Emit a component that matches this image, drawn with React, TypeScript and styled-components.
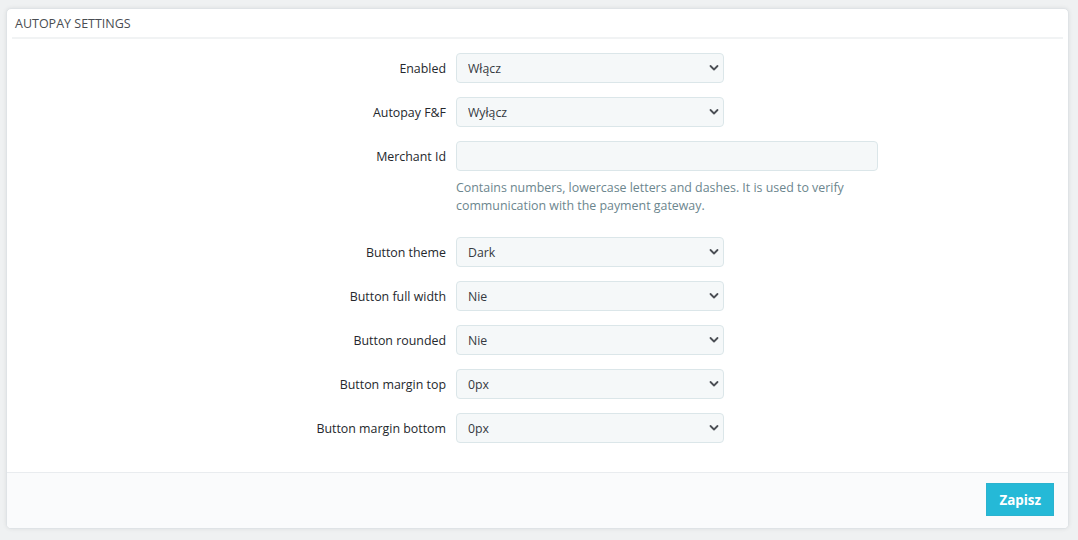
import React from "react";
import styled, { createGlobalStyle } from "styled-components";

const Global = createGlobalStyle`
  html, body { margin: 0; padding: 0; background: #eff1f2; }
  body { font-family: "Open Sans", "Liberation Sans", sans-serif; color: #363a41; }
  * { box-sizing: border-box; }
`;

const Page = styled.div`
  padding: 8px 9px 11px 6px;
`;

const Card = styled.div`
  background: #fff;
  border: 1px solid #dfe3e6;
  border-radius: 5px;
  box-shadow: 0 0 4px rgba(0, 0, 0, 0.08);
  overflow: hidden;
`;

const Header = styled.div`
  margin: 0 5px;
  height: 30px;
  padding: 0 3px;
  display: flex;
  align-items: center;
  font-size: 12.5px;
  text-transform: uppercase;
  color: #4a4d52;
  border-bottom: 2px solid #f1f3f4;
`;

const Body = styled.div`
  padding: 14px 0 29px;
  display: flex;
  flex-direction: column;
  gap: 14px;
`;

const Row = styled.div<{ $extra?: number }>`
  display: grid;
  grid-template-columns: 439px 1fr;
  column-gap: 10px;
  margin-top: ${(p) => p.$extra ?? 0}px;
`;

const Label = styled.label`
  height: 30px;
  display: flex;
  align-items: center;
  justify-content: flex-end;
  font-size: 12.4px;
  color: #25282d;
`;

const Field = styled.div`
  display: flex;
  flex-direction: column;
`;

const SelectWrap = styled.div`
  position: relative;
  width: 268px;
  height: 30px;
`;

const SelectBox = styled.select`
  appearance: none;
  -webkit-appearance: none;
  width: 100%;
  height: 100%;
  padding: 0 28px 0 11px;
  font-family: inherit;
  font-size: 12.3px;
  color: #363a41;
  background: #f5f8f9;
  border: 1px solid #dbe6e9;
  border-radius: 4px;
  outline: none;
`;

const Chevron = styled.svg`
  position: absolute;
  right: 5px;
  top: 11px;
  pointer-events: none;
`;

const TextInput = styled.input`
  width: 422px;
  height: 30px;
  padding: 0 11px;
  font-family: inherit;
  font-size: 12.5px;
  background: #f5f8f9;
  border: 1px solid #dbe6e9;
  border-radius: 4px;
  outline: none;
`;

const Help = styled.p`
  margin: 8px 0 0;
  width: 420px;
  font-size: 12.4px;
  line-height: 18px;
  color: #6c868e;
`;

const Footer = styled.div`
  background: #fafbfc;
  border-top: 1px solid #e9ecef;
  padding: 10px 14px 12px;
  display: flex;
  justify-content: flex-end;
`;

const SaveButton = styled.button`
  height: 33px;
  padding: 0 12px;
  background: #25b9d7;
  border: 1px solid #2bb3cf;
  border-radius: 0;
  color: #fff;
  font-family: inherit;
  font-weight: 700;
  font-size: 13.4px;
  cursor: pointer;
`;

type SelectProps = { value: string; options: string[] };

const Select = ({ value, options }: SelectProps) => (
  <SelectWrap>
    <SelectBox defaultValue={value}>
      {options.map((o) => (
        <option key={o}>{o}</option>
      ))}
    </SelectBox>
    <Chevron width="10" height="8" viewBox="0 0 10 8">
      <path d="M1.5 2 L5 5.5 L8.5 2" fill="none" stroke="#4b4f55" strokeWidth="1.8" strokeLinecap="round" strokeLinejoin="round" />
    </Chevron>
  </SelectWrap>
);

const rows: { label: string; value: string; options: string[] }[] = [
  { label: "Button theme", value: "Dark", options: ["Dark", "Light"] },
  { label: "Button full width", value: "Nie", options: ["Nie", "Tak"] },
  { label: "Button rounded", value: "Nie", options: ["Nie", "Tak"] },
  { label: "Button margin top", value: "0px", options: ["0px", "5px", "10px"] },
  { label: "Button margin bottom", value: "0px", options: ["0px", "5px", "10px"] },
];

export default function App() {
  return (
    <Page>
      <Global />
      <Card>
        <Header>Autopay Settings</Header>
        <Body>
          <Row>
            <Label>Enabled</Label>
            <Select value="Włącz" options={["Włącz", "Wyłącz"]} />
          </Row>
          <Row>
            <Label>Autopay F&amp;F</Label>
            <Select value="Wyłącz" options={["Włącz", "Wyłącz"]} />
          </Row>
          <Row>
            <Label>Merchant Id</Label>
            <Field>
              <TextInput type="text" />
              <Help>
                Contains numbers, lowercase letters and dashes. It is used to verify communication with the payment gateway.
              </Help>
            </Field>
          </Row>
          {rows.map((r, i) => (
            <Row key={r.label} $extra={i === 0 ? 8 : 0}>
              <Label>{r.label}</Label>
              <Select value={r.value} options={r.options} />
            </Row>
          ))}
        </Body>
        <Footer>
          <SaveButton>Zapisz</SaveButton>
        </Footer>
      </Card>
    </Page>
  );
}
